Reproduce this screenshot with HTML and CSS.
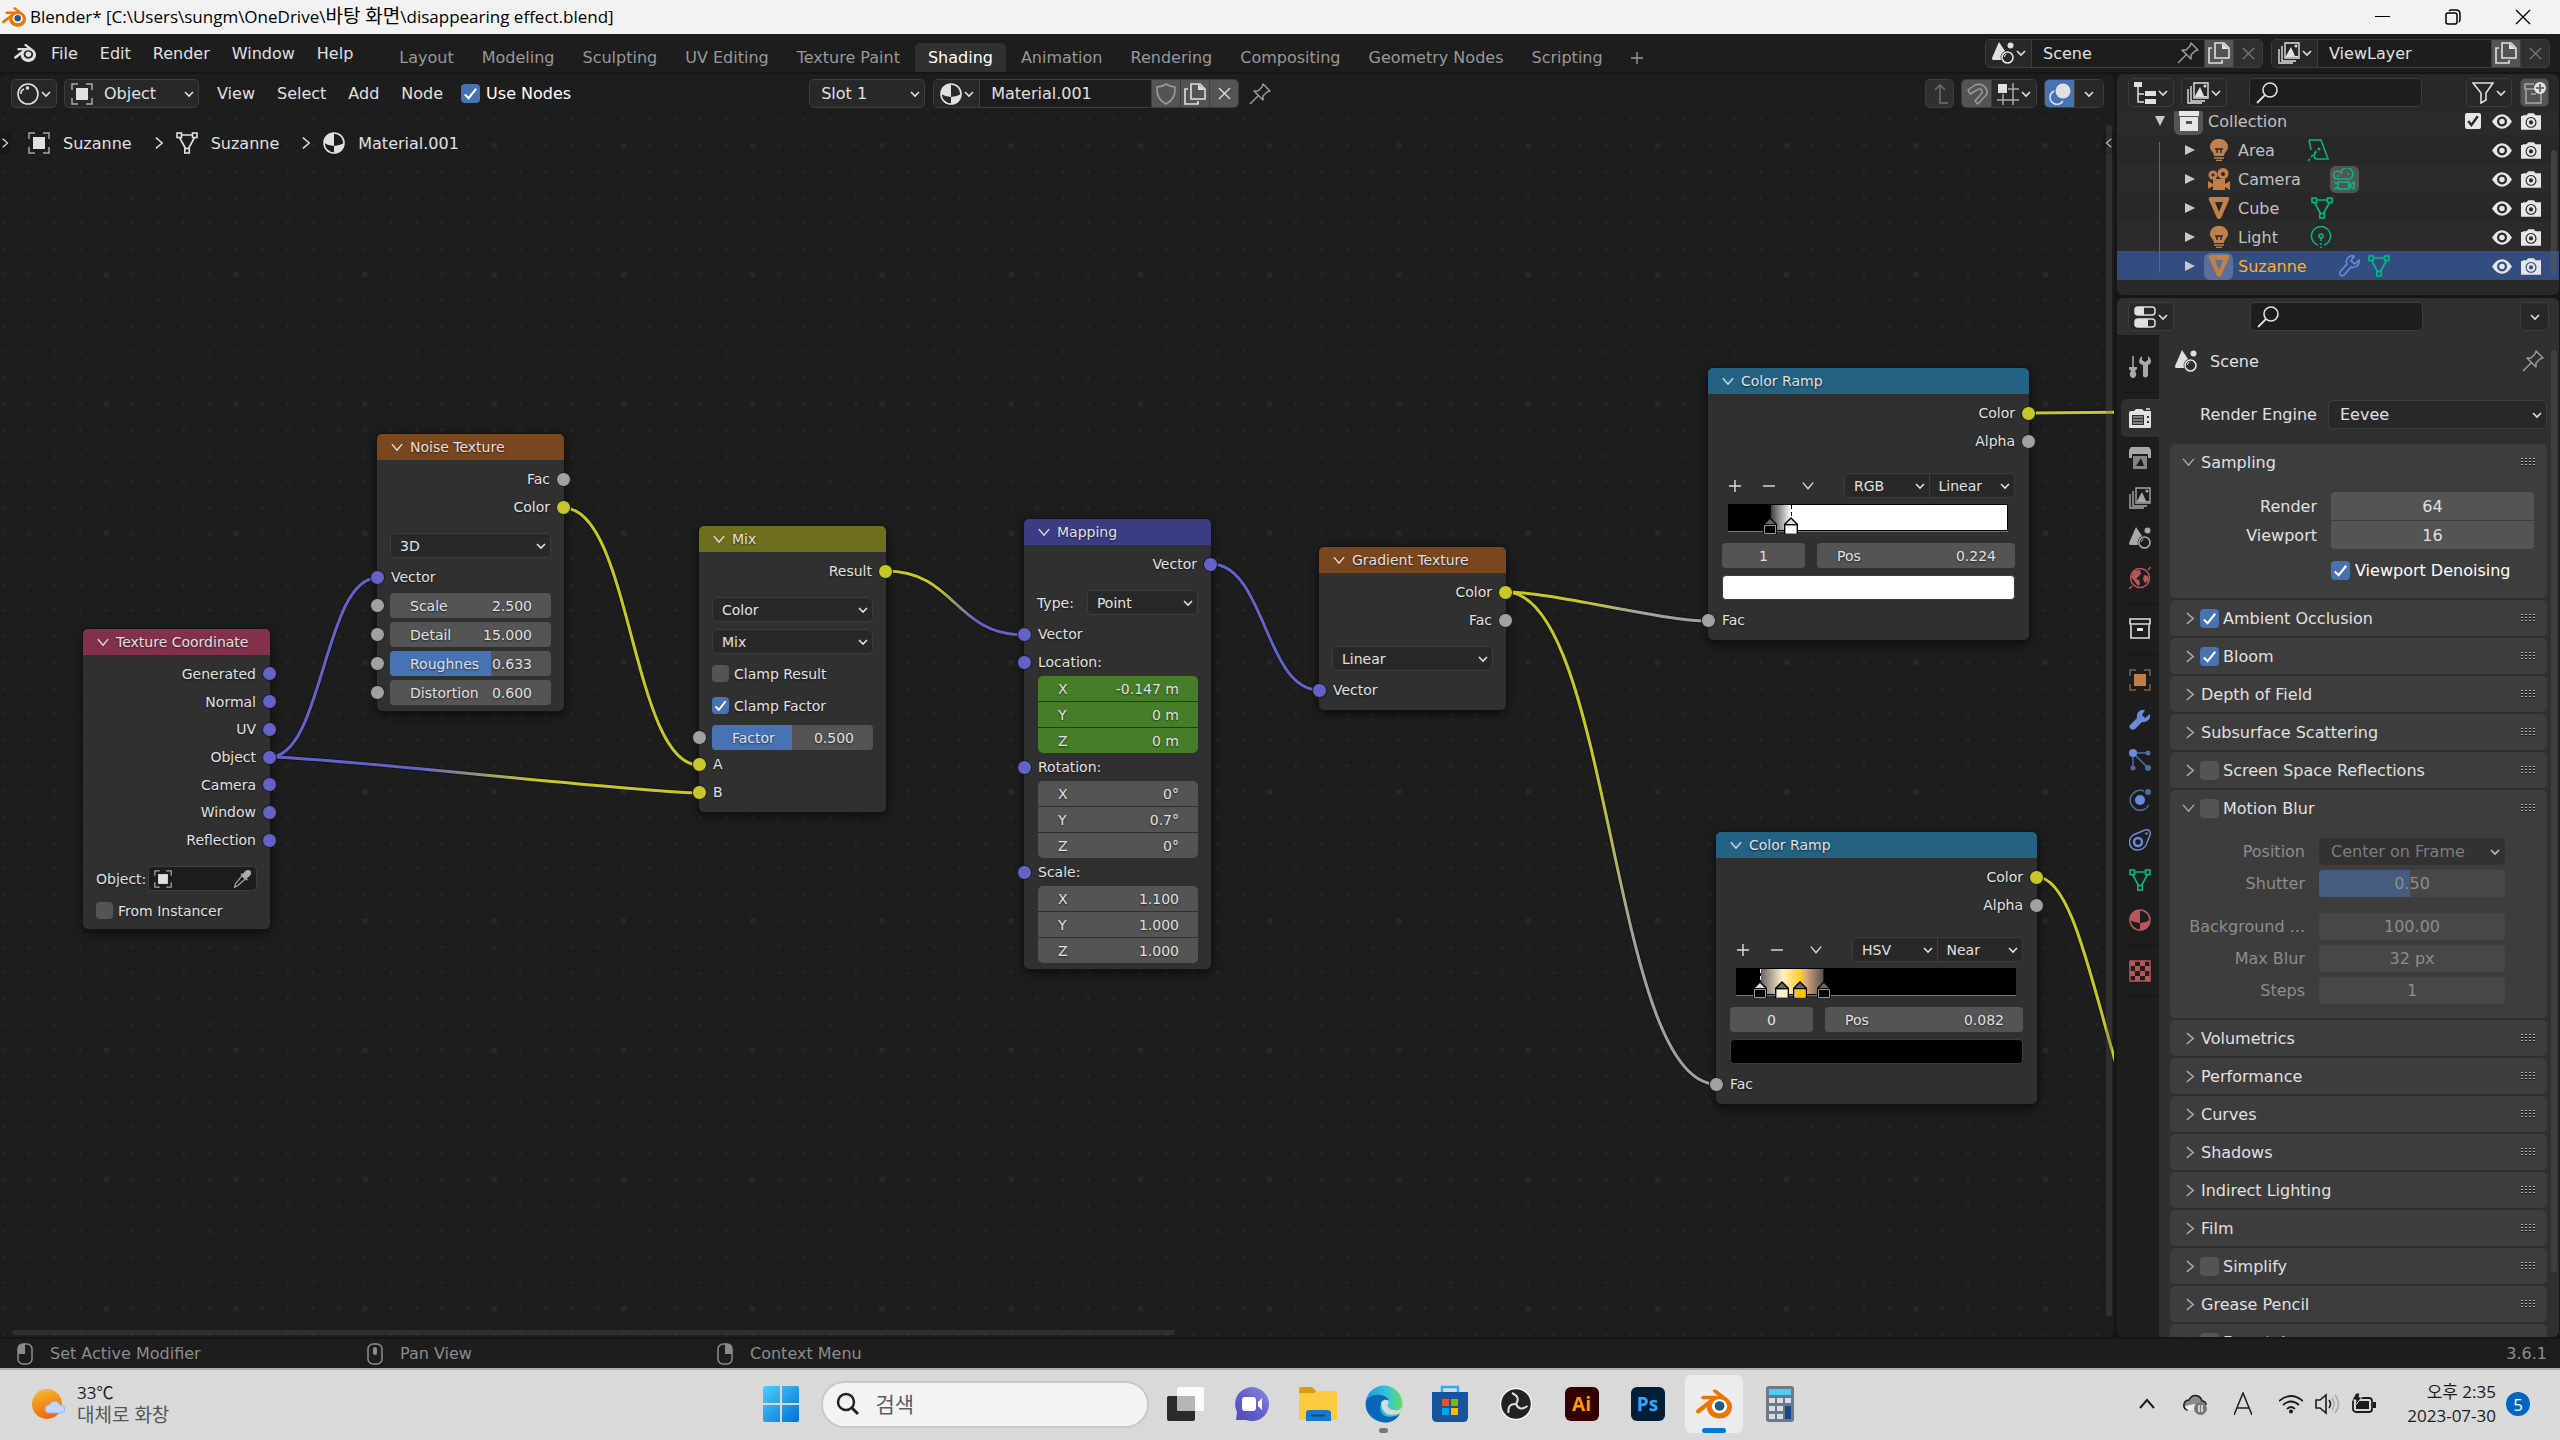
FILE: index.html
```html
<!DOCTYPE html>
<html lang="ko">
<head>
  <meta charset="UTF-8">
  <meta name="viewport" content="width=device-width, initial-scale=1.0">
  <title>Blender</title>
  <link rel="stylesheet" href="styles.css">
</head>
<body>
  <!-- icon sprite -->
  <svg class="sprite" width="0" height="0" aria-hidden="true">
    <symbol id="blender" viewBox="0 0 24 24"><path fill="currentColor" d="M12.51 13.214c.046-.8.438-1.506 1.03-2.006a3.424 3.424 0 0 1 2.212-.79c.85 0 1.631.3 2.211.79.592.5.983 1.206 1.028 2.005.045.823-.285 1.586-.865 2.153a3.389 3.389 0 0 1-2.374.938 3.393 3.393 0 0 1-2.376-.938c-.58-.567-.91-1.33-.865-2.152M7.35 14.831c.006.314.106.922.256 1.398a7.372 7.372 0 0 0 1.593 2.757 8.227 8.227 0 0 0 2.787 2.001 8.947 8.947 0 0 0 3.66.76 8.964 8.964 0 0 0 3.657-.772 8.285 8.285 0 0 0 2.785-2.01 7.428 7.428 0 0 0 1.592-2.762 6.964 6.964 0 0 0 .25-3.074 7.123 7.123 0 0 0-1.016-2.779 7.764 7.764 0 0 0-1.852-2.043h.002L13.566 2.55l-.02-.015c-.492-.378-1.319-.376-1.86.002-.547.382-.609 1.015-.123 1.415l-.001.001 3.126 2.543-9.53.01h-.013c-.788.001-1.545.518-1.695 1.172-.154.665.38 1.217 1.2 1.22V8.9l4.83-.01-8.62 6.617-.034.025c-.813.622-1.075 1.658-.563 2.315.52.667 1.625.668 2.447.004L7.414 14s-.069.52-.063.831zm12.09 1.741c-.97.988-2.326 1.548-3.795 1.55-1.47.004-2.827-.552-3.797-1.538a4.51 4.51 0 0 1-1.036-1.622 4.282 4.282 0 0 1 .282-3.519 4.702 4.702 0 0 1 1.153-1.371c.942-.768 2.141-1.183 3.396-1.185 1.256-.002 2.455.41 3.398 1.175.48.391.87.854 1.152 1.367a4.28 4.28 0 0 1 .522 1.706 4.236 4.236 0 0 1-.239 1.811 4.54 4.54 0 0 1-1.035 1.626"/></symbol>
    <symbol id="chev-down" viewBox="0 0 10 10"><path d="M1 3l4 4 4-4" fill="none" stroke="currentColor" stroke-width="1.6"/></symbol>
    <symbol id="chev-right" viewBox="0 0 10 14"><path d="M1 1l7 6-7 6" fill="none" stroke="currentColor" stroke-width="1.6"/></symbol>
    <symbol id="chev-open" viewBox="0 0 14 10"><path d="M1 1l6 7 6-7" fill="none" stroke="currentColor" stroke-width="1.6"/></symbol>
    <symbol id="tri-down" viewBox="0 0 10 10"><path d="M0 0h10L5 10z" fill="currentColor"/></symbol>
    <symbol id="tri-right" viewBox="0 0 10 10"><path d="M0 0v10l10-5z" fill="currentColor"/></symbol>
    <symbol id="ball" viewBox="0 0 22 22"><circle cx="11" cy="11" r="10" fill="none" stroke="currentColor" stroke-width="1.6"/><circle cx="10.500" cy="5" r="1.800" fill="currentColor"/><path d="M4 11a5 5 0 0 1 3-5" fill="none" stroke="currentColor" stroke-width="1.6"/></symbol>
    <symbol id="object" viewBox="0 0 22 22"><path d="M1 7V1h6M15 1h6v6M21 15v6h-6M7 21H1v-6" fill="none" stroke="currentColor" stroke-width="1.500" opacity=".7"/><rect x="5" y="5" width="12" height="12" fill="currentColor"/></symbol>
    <symbol id="mesh" viewBox="0 0 22 22"><g fill="none" stroke="currentColor" stroke-width="1.600"><path d="M5 3h12M3.500 5.500l6 11M18.500 5.500l-6 11"/><rect x="1" y="1" width="4.500" height="4.500"/><rect x="16.500" y="1" width="4.500" height="4.500"/><rect x="8.800" y="16.500" width="4.500" height="4.500"/></g></symbol>
    <symbol id="material" viewBox="0 0 22 22"><circle cx="11" cy="11" r="10" fill="none" stroke="currentColor" stroke-width="1.600"/><path d="M11 1a10 10 0 0 0-10 10q5 3 10 3zM11 14q5 0 10-3A10 10 0 0 1 11 21z" fill="currentColor"/></symbol>
    <symbol id="shield" viewBox="0 0 22 22"><path d="M11 1Q7 4 2 4q-1 12 9 17 10-5 9-17-5 0-9-3z" fill="none" stroke="currentColor" stroke-width="1.600"/></symbol>
    <symbol id="copy" viewBox="0 0 22 22"><path d="M7 1h9l5 5v10H7zM4 6H1v15h13v-3" fill="none" stroke="currentColor" stroke-width="1.600"/><path d="M14 1l7 6h-7z" fill="currentColor"/></symbol>
    <symbol id="close" viewBox="0 0 14 14"><path d="M1 1l12 12M13 1L1 13" fill="none" stroke="currentColor" stroke-width="1.400"/></symbol>
    <symbol id="pin" viewBox="0 0 22 22"><path d="M14 1l7 7-3 1-4 4v4l-9-9h4l4-4zM9 13l-8 8" fill="none" stroke="currentColor" stroke-width="1.500" stroke-linejoin="round"/></symbol>
    <symbol id="up" viewBox="0 0 22 22"><path d="M6 7l5-5 5 5M11 2v18h8" fill="none" stroke="currentColor" stroke-width="1.500"/></symbol>
    <symbol id="magnet" viewBox="0 0 22 22"><path d="M2 7l7-5c7-3 13 3 12 9l-9 10-3-3 7-8c1-4-2-5-5-3l-7 4z" fill="none" stroke="currentColor" stroke-width="1.500" stroke-linejoin="round"/></symbol>
    <symbol id="snap" viewBox="0 0 22 22"><path d="M16 0v22M6 11v11M0 17h22M11 6h11" stroke="currentColor" stroke-width="1.500" opacity=".7"/><rect x="1" y="1" width="9" height="9" fill="currentColor"/></symbol>
    <symbol id="overlay" viewBox="0 0 22 22"><circle cx="14" cy="8" r="7.500" fill="currentColor"/><path d="M5 8a7 7 0 1 0 9 10" fill="none" stroke="currentColor" stroke-width="1.600"/></symbol>
    <symbol id="scene" viewBox="0 0 22 22"><path d="M7 0l6 9a7 7 0 0 0-4 9H1Q0 18 0 16z" fill="currentColor"/><circle cx="18.500" cy="3.500" r="3" fill="currentColor"/><circle cx="15.500" cy="15.500" r="5.500" fill="none" stroke="currentColor" stroke-width="1.600"/><path d="M12.500 15a3 3 0 0 1 2-3" fill="none" stroke="currentColor"/></symbol>
    <symbol id="layers" viewBox="0 0 22 22"><path d="M7 1h14v15H7zM4 4v15h14M1 7v14h14" fill="none" stroke="currentColor" stroke-width="1.400"/><path d="M8 14l5-9 4 9zM8 14h12v1H8z" fill="currentColor"/><circle cx="18" cy="4" r="1.500" fill="currentColor"/></symbol>
    <symbol id="tree" viewBox="0 0 22 22"><path d="M4 5v15h6M4 12h6" fill="none" stroke="currentColor" stroke-width="1.500"/><path d="M0 0h8v5H0zM11 9h11v5H11zM11 17h11v5H11z" fill="currentColor"/></symbol>
    <symbol id="search" viewBox="0 0 22 22"><circle cx="14" cy="8" r="7" fill="none" stroke="currentColor" stroke-width="1.600"/><path d="M9 13l-8 8" stroke="currentColor" stroke-width="1.800"/></symbol>
    <symbol id="filter" viewBox="0 0 22 22"><path d="M1 1h20l-7 10v7l-5 3V11z" fill="none" stroke="currentColor" stroke-width="1.600"/></symbol>
    <symbol id="newcol" viewBox="0 0 22 22"><g opacity=".6" fill="none" stroke="currentColor" stroke-width="1.500"><path d="M10 2H1v5h13M2 8v13h15v-9M7 12h5"/></g><circle cx="16" cy="6" r="6" fill="currentColor"/><path d="M16 2v8M12 6h8" stroke="#545454" stroke-width="1.600"/></symbol>
    <symbol id="collection" viewBox="0 0 22 22"><path d="M1 1h20v5H1zM2 7v13h18V7" fill="none" stroke="currentColor" stroke-width="1.600"/><path d="M8 10h6v3H8z" fill="currentColor"/></symbol>
    <symbol id="collection-fill" viewBox="0 0 22 22"><path d="M1 0h20v6H1zM2 7h18v14H2z" fill="currentColor"/><rect x="8" y="11" width="6" height="3" fill="#545454"/></symbol>
    <symbol id="bulb" viewBox="0 0 22 22"><path d="M11 0a8 8 0 0 1 9 8c0 4-4 5-4 9H6c0-4-4-5-4-9a8 8 0 0 1 9-8z" fill="currentColor"/><path d="M7 10h8M9 10v4M13 10v4" stroke="#282828" stroke-width="1.500"/><path d="M6 19h10M8 21.500h6" stroke="currentColor" stroke-width="1.500"/></symbol>
    <symbol id="cam" viewBox="0 0 22 22"><circle cx="5" cy="7" r="4.500" fill="currentColor"/><circle cx="15" cy="5.500" r="5.500" fill="currentColor"/><path d="M5 11h12v11H5zM0 13l5 3v2l-5 3zM22 13l-5 3v3l5 3z" fill="currentColor"/><circle cx="5" cy="7" r="1.500" fill="#282828"/><circle cx="15" cy="6" r="2" fill="#282828"/></symbol>
    <symbol id="cam-line" viewBox="0 0 22 22"><g fill="none" stroke="currentColor" stroke-width="1.500"><path d="M5 11a4 4 0 1 1 3-6 6 6 0 1 1 9 6zM5 14h11v7H5zM1 14l4 2M1 21l4-2M21 14v7l-5-3z"/><path d="M4 8h2M14 6h2"/></g></symbol>
    <symbol id="cone" viewBox="0 0 22 22"><path fill-rule="evenodd" d="M2 0h18q2 1 1 3l-8 18q-2 2-4 0L1 3Q0 1 2 0zM7 5l4 10 4-10z" fill="currentColor"/></symbol>
    <symbol id="area" viewBox="0 0 22 22"><path d="M2 1h12l7 19H10q-3 0-3-4l2-3M2 1l2 10" fill="none" stroke="currentColor" stroke-width="1.500"/><path d="M1 22l9-11" stroke="currentColor" stroke-width="1.500" stroke-dasharray="3 2"/><circle cx="12" cy="10" r="1.500" fill="currentColor"/></symbol>
    <symbol id="light" viewBox="0 0 22 22"><path d="M8 19a9.500 9.500 0 1 1 6 0" fill="none" stroke="currentColor" stroke-width="1.500"/><circle cx="11" cy="10" r="2" fill="none" stroke="currentColor" stroke-width="1.500"/><path d="M11 12v3M11 17v2M11 20.500v1.500" stroke="currentColor" stroke-width="1.500"/></symbol>
    <symbol id="wrench" viewBox="0 0 22 22"><path d="M20 5l-4 4-4-3 3-5c-5-1-9 3-7 8l-7 8c-1 3 2 5 4 3l7-8c5 1 9-2 8-7z" fill="none" stroke="currentColor" stroke-width="1.600" stroke-linejoin="round"/></symbol>
    <symbol id="wrench-fill" viewBox="0 0 22 22"><path d="M21 5l-5 4-3-3 3-5c-5-1-9 3-8 8l-7 7c-2 3 2 6 5 4l7-7c5 1 9-3 8-8z" fill="currentColor"/></symbol>
    <symbol id="eye" viewBox="0 0 22 16"><path fill-rule="evenodd" d="M0 8q5-8 11-8t11 8q-5 8-11 8T0 8zm11-5.500a5.500 5.500 0 1 0 .1 0z" fill="currentColor"/><circle cx="11" cy="8" r="3" fill="currentColor"/></symbol>
    <symbol id="camera" viewBox="0 0 22 18"><path fill-rule="evenodd" d="M6 2l2-2h6l2 2h6v16H0V3h2V2h2zm5 2a6 6 0 1 0 .1 0z" fill="currentColor"/><circle cx="11" cy="10" r="3.500" fill="none" stroke="currentColor" stroke-width="2.500"/></symbol>
    <symbol id="props" viewBox="0 0 22 22"><rect x="1" y="1" width="20" height="8" rx="3" fill="none" stroke="currentColor" stroke-width="1.500"/><rect x="1" y="13" width="20" height="8" rx="3" fill="none" stroke="currentColor" stroke-width="1.500"/><path d="M4 1h6v8H4q-3 0-3-4t3-4zM4 13h10v8H4q-3 0-3-4t3-4z" fill="currentColor"/></symbol>
    <symbol id="tools" viewBox="0 0 22 22"><path d="M4 0v11" stroke="currentColor" stroke-width="1.600"/><path d="M0 11h8v2l-2 2q3 4-1 7H3q-4-3-1-7l-2-2z" fill="currentColor"/><path d="M13 0v4l3 2 3-2V0q3 2 3 5t-3 4v11q-3 3-5 0V9q-4-1-4-4t3-5z" fill="currentColor"/></symbol>
    <symbol id="render" viewBox="0 0 22 22"><path fill-rule="evenodd" d="M2 4h3l2-2h6l2 2h7v16q0 1-1 1H1q-1 0-1-1V6q0-2 2-2zm1 4v10h12V8zm15 1v2h2V9zm0 5v2h2v-2z" fill="currentColor"/><path d="M4 10h10M4 13h10M4 16h10" stroke="currentColor" stroke-width="1.500" opacity=".6"/><path d="M17 2h4" stroke="currentColor" stroke-width="1.500"/></symbol>
    <symbol id="output" viewBox="0 0 22 22"><path d="M2 0h18l2 3v8h-3V7H3v4H0V3z" fill="currentColor"/><path fill-rule="evenodd" d="M4 9h14v13H4zm3 10h8l-3-8z" fill="currentColor" opacity=".75"/></symbol>
    <symbol id="world" viewBox="0 0 22 22"><circle cx="11" cy="11" r="9.500" fill="none" stroke="currentColor" stroke-width="1.500"/><path d="M5 4l6-1 1 4-5 5 3 1 1 4-2 2-3-4-4-5zM15 8l4 1 1 4-4 3-2-4z" fill="currentColor"/><path d="M0 22l3-3M19 3l3-3" stroke="currentColor" stroke-width="1.500"/></symbol>
    <symbol id="particles" viewBox="0 0 22 22"><g opacity=".7"><path d="M4 4l15 15M4 4h15M4 4v15" stroke="currentColor" stroke-width="1.500"/><circle cx="19" cy="4" r="2.500" fill="currentColor"/><circle cx="19" cy="19" r="3" fill="currentColor"/><circle cx="4" cy="19" r="2.500" fill="currentColor"/></g><circle cx="4" cy="4" r="4" fill="currentColor"/></symbol>
    <symbol id="physics" viewBox="0 0 22 22"><circle cx="11" cy="11" r="5" fill="currentColor"/><g opacity=".7"><path d="M15 2a10 10 0 1 0 5 14" fill="none" stroke="currentColor" stroke-width="1.500"/><circle cx="19" cy="3" r="3" fill="currentColor"/></g></symbol>
    <symbol id="constraint" viewBox="0 0 22 22"><path d="M4 6L16 1c4-1 6 2 5 5l-4 10c-3 6-11 6-14 3-4-4-3-10 1-13z" fill="none" stroke="currentColor" stroke-width="1.500"/><circle cx="9" cy="13" r="4" fill="none" stroke="currentColor" stroke-width="2.500"/><circle cx="17.500" cy="4.500" r="1.200" fill="currentColor"/></symbol>
    <symbol id="texture" viewBox="0 0 22 22"><rect x="1" y="1" width="20" height="20" fill="none" stroke="currentColor" stroke-width="1.500"/><path d="M1 1h5v5H1zM11 1h5v5h-5zM6 6h5v5H6zM16 6h5v5h-5zM1 11h5v5H1zM11 11h5v5h-5zM6 16h5v5H6zM16 16h5v5h-5z" fill="currentColor"/></symbol>
    <symbol id="grip" viewBox="0 0 15 9"><path d="M0 1.500h15M0 4.500h15M0 7.500h15" stroke="#111" stroke-width="1" stroke-dasharray="2 2"/><path d="M0 .500h15M0 3.500h15M0 6.500h15" stroke="#b0b0b0" stroke-width="1" stroke-dasharray="2 2"/></symbol>
    <symbol id="dropper" viewBox="0 0 22 22"><path d="M11 7l4 4-9 8-4 2 1-4z" fill="none" stroke="currentColor" stroke-width="1.500"/><path d="M9 5l2-1 1 1c4-6 7-6 9-4s2 5-4 9l1 1-1 2zM2 19l2 1-3 2z" fill="currentColor"/></symbol>
    <symbol id="plus" viewBox="0 0 12 12"><path d="M6 0v12M0 6h12" stroke="currentColor" stroke-width="1.400"/></symbol>
    <symbol id="minus" viewBox="0 0 12 12"><path d="M0 6h12" stroke="currentColor" stroke-width="1.400"/></symbol>
    <symbol id="mouse" viewBox="0 0 16 22"><rect x="1" y="1" width="14" height="20" rx="5" fill="none" stroke="currentColor" stroke-width="1.500"/></symbol>
  </svg>

  <header class="titlebar">
    <svg class="logo" viewBox="0 0 24 24"><circle cx="15.700" cy="13.300" r="5" fill="#fff"/><use href="#blender"/><circle cx="15.700" cy="13.300" r="3.200" fill="#265787"/></svg>
    <span class="title">Blender* [C:\Users\sungm\OneDrive\<span class="ko">바탕 화면</span>\disappearing effect.blend]</span>
    <button aria-label="Minimize"><svg width="16" height="16"><path d="M0 7.500h15" stroke="#000"/></svg></button>
    <button aria-label="Restore"><svg width="16" height="16"><path d="M1 6q0-2 2-2h7q2 0 2 2v7q0 2-2 2H3q-2 0-2-2zM4 2q1-1 2-1h5q4 0 4 4v5q0 2-1 3" fill="none" stroke="#000" stroke-width="1.500"/></svg></button>
    <button aria-label="Close"><svg width="16" height="16"><path d="M1 1l14 14M15 1L1 15" stroke="#000" stroke-width="1.300"/></svg></button>
  </header>

  <div class="topbar">
    <nav class="menus">
      <svg class="icon"><use href="#blender"/></svg>
      <button>File</button><button>Edit</button><button>Render</button><button>Window</button><button>Help</button>
    </nav>
    <nav class="workspaces">
      <button>Layout</button><button>Modeling</button><button>Sculpting</button><button>UV Editing</button><button>Texture Paint</button><button class="active">Shading</button><button>Animation</button><button>Rendering</button><button>Compositing</button><button>Geometry Nodes</button><button>Scripting</button><button aria-label="Add workspace"><svg width="12" height="12"><use href="#plus"/></svg></button>
    </nav>
    <div class="id-block">
      <button class="pick" aria-label="Browse scene"><svg class="icon"><use href="#scene"/></svg><svg class="chev"><use href="#chev-down"/></svg></button>
      <input class="scene-name" value="Scene" aria-label="Scene name">
      <button class="pin-btn" aria-label="Pin"><svg class="icon dim"><use href="#pin"/></svg></button>
      <button class="lit" aria-label="New scene"><svg class="icon"><use href="#copy"/></svg></button>
      <button class="off" aria-label="Delete scene"><svg class="small"><use href="#close"/></svg></button>
    </div>
    <div class="id-block">
      <button class="pick" aria-label="Browse view layer"><svg class="icon"><use href="#layers"/></svg><svg class="chev"><use href="#chev-down"/></svg></button>
      <input class="layer-name" value="ViewLayer" aria-label="View layer name">
      <button class="lit" aria-label="New layer"><svg class="icon"><use href="#copy"/></svg></button>
      <button class="off" aria-label="Delete layer"><svg class="small"><use href="#close"/></svg></button>
    </div>
  </div>

  <main class="screen">
    <section class="editor">
      <div class="editor-header">
        <button class="type-btn" aria-label="Editor type"><svg class="icon"><use href="#ball"/></svg><svg class="chev"><use href="#chev-down"/></svg></button>
        <div class="mode"><svg class="icon"><use href="#object"/></svg><select aria-label="Shader type"><option>Object</option></select></div>
        <nav class="menus">
          <button>View</button><button>Select</button><button>Add</button><button>Node</button>
        </nav>
        <label class="check use-nodes"><input type="checkbox" checked>Use Nodes</label>
        <select class="slot" aria-label="Slot"><option>Slot 1</option></select>
        <div class="id-block">
          <button class="pick" aria-label="Browse material"><svg class="icon"><use href="#material"/></svg><svg class="chev"><use href="#chev-down"/></svg></button>
          <input class="mat-name" value="Material.001" aria-label="Material name">
          <button class="lit" aria-label="Fake user"><svg class="icon dim"><use href="#shield"/></svg></button>
          <button class="lit" aria-label="New material"><svg class="icon"><use href="#copy"/></svg></button>
          <button class="lit" aria-label="Unlink"><svg class="small"><use href="#close"/></svg></button>
        </div>
        <button class="plain" aria-label="Pin"><svg class="icon dim"><use href="#pin"/></svg></button>
        <div class="header-right">
          <button class="box parent" aria-label="Parent node tree"><svg class="icon dim"><use href="#up"/></svg></button>
          <div class="id-block"><button class="lit" aria-label="Snap"><svg class="icon dim"><use href="#magnet"/></svg></button><button class="pick" aria-label="Snap to"><svg class="icon"><use href="#snap"/></svg><svg class="chev"><use href="#chev-down"/></svg></button></div>
          <div class="id-block"><button class="on" aria-label="Overlays"><svg class="icon"><use href="#overlay"/></svg></button><button aria-label="Overlay options"><svg class="chev"><use href="#chev-down"/></svg></button></div>
        </div>
      </div>

      <div class="node-tree">
        <svg class="links">
          <defs>
            <pattern id="dots" x="41" y="6" width="129.250" height="129.250" patternUnits="userSpaceOnUse">
              <g fill="#262626"><path id="dotrow" d="M12 12h3v3h-3zM38 12h3v3h-3zM64 12h3v3h-3zM90 12h3v3h-3zM116 12h3v3h-3z"/><use href="#dotrow" y="26"/><use href="#dotrow" y="52"/><use href="#dotrow" y="78"/><use href="#dotrow" y="104"/></g>
              <rect x="63" y="63" width="5" height="5" fill="#292929"/>
            </pattern>
            <linearGradient id="vec-col" gradientUnits="userSpaceOnUse" x1="270" y1="0" x2="699" y2="0"><stop offset=".35" stop-color="#6363c7"/><stop offset=".62" stop-color="#c7c729"/></linearGradient>
            <linearGradient id="col-vec" gradientUnits="userSpaceOnUse" x1="886" y1="0" x2="1024" y2="0"><stop offset=".35" stop-color="#c7c729"/><stop offset=".65" stop-color="#6363c7"/></linearGradient>
            <linearGradient id="col-fac" gradientUnits="userSpaceOnUse" x1="1506" y1="0" x2="1708" y2="0"><stop offset=".35" stop-color="#c7c729"/><stop offset=".65" stop-color="#a1a1a1"/></linearGradient>
            <linearGradient id="col-fac2" gradientUnits="userSpaceOnUse" x1="0" y1="592" x2="0" y2="1084"><stop offset=".35" stop-color="#c7c729"/><stop offset=".7" stop-color="#a1a1a1"/></linearGradient>
          </defs>
          <rect y="38" width="100%" height="100%" fill="url(#dots)"/>
          <g id="noodles" transform="translate(0 -74)" fill="none">
            <g stroke="#141414" stroke-width="5">
              <path d="M270 757C323 757 324 578 377 578"/><path d="M270 757C328 757 641 793 699 793"/><path d="M564 508C631 508 632 765 699 765"/><path d="M886 571C955 571 955 635 1024 635"/><path d="M1211 564C1265 564 1265 690 1319 690"/><path d="M1506 592C1553 592 1661 621 1708 621"/><path d="M1506 592C1611 592 1611 1084 1716 1084"/><path d="M2029 413L2130 412"/><path d="M2037 877C2070 877 2090 975 2114 1057l10 36"/>
            </g>
            <g stroke-width="3">
              <path d="M270 757C323 757 324 578 377 578" stroke="#6363c7"/>
              <path d="M270 757C328 757 641 793 699 793" stroke="url(#vec-col)"/>
              <path d="M564 508C631 508 632 765 699 765" stroke="#c7c729"/>
              <path d="M886 571C955 571 955 635 1024 635" stroke="url(#col-vec)"/>
              <path d="M1211 564C1265 564 1265 690 1319 690" stroke="#6363c7"/>
              <path d="M1506 592C1611 592 1611 1084 1716 1084" stroke="url(#col-fac2)"/>
              <path d="M1506 592C1553 592 1661 621 1708 621" stroke="url(#col-fac)"/>
              <path d="M2029 413L2130 412" stroke="#c7c729"/>
              <path d="M2037 877C2070 877 2090 975 2114 1057l10 36" stroke="#c7c729"/>
            </g>
          </g>
        </svg>

        <article class="node n-coord">
          <h2 class="input"><svg><use href="#chev-open"/></svg>Texture Coordinate</h2>
          <div class="outs">
            <p class="out vec">Generated</p><p class="out vec">Normal</p><p class="out vec">UV</p><p class="out vec">Object</p><p class="out vec">Camera</p><p class="out vec">Window</p><p class="out vec">Reflection</p>
          </div>
          <div class="stack">
            <div class="line tight"><label for="obj">Object:</label><div class="picker"><svg><use href="#object"/></svg><input id="obj"><svg class="dropper"><use href="#dropper"/></svg></div></div>
            <label class="check"><input type="checkbox">From Instancer</label>
          </div>
        </article>

        <article class="node n-noise">
          <h2 class="texture"><svg><use href="#chev-open"/></svg>Noise Texture</h2>
          <div class="outs"><p class="out fac">Fac</p><p class="out col">Color</p></div>
          <div class="stack"><select aria-label="Dimensions"><option>3D</option></select></div>
          <p class="in vec first">Vector</p>
          <div class="ins">
            <div class="in fac"><label class="num">Scale<input value="2.500"></label></div>
            <div class="in fac"><label class="num">Detail<input value="15.000"></label></div>
            <div class="in fac"><label class="num slide" style="--fill: 63%">Roughnes<input value="0.633"></label></div>
            <div class="in fac"><label class="num">Distortion<input value="0.600"></label></div>
          </div>
        </article>

        <article class="node n-mix">
          <h2 class="color"><svg><use href="#chev-open"/></svg>Mix</h2>
          <div class="outs"><p class="out col">Result</p></div>
          <div class="stack">
            <select aria-label="Data type"><option>Color</option></select>
            <select aria-label="Blend mode"><option>Mix</option></select>
            <label class="check"><input type="checkbox">Clamp Result</label>
            <label class="check"><input type="checkbox" checked>Clamp Factor</label>
            <div class="line in fac wide"><label class="num slide" style="--fill: 50%">Factor<input value="0.500"></label></div>
          </div>
          <p class="in col">A</p><p class="in col">B</p>
        </article>

        <article class="node n-mapping">
          <h2 class="vector"><svg><use href="#chev-open"/></svg>Mapping</h2>
          <div class="outs"><p class="out vec">Vector</p></div>
          <div class="stack"><div class="line"><label for="maptype">Type:</label><select id="maptype"><option>Point</option></select></div></div>
          <p class="in vec first">Vector</p>
          <p class="in vec">Location:</p>
          <div class="triple keyed"><label class="num">X<input value="-0.147 m"></label><label class="num">Y<input value="0 m"></label><label class="num">Z<input value="0 m"></label></div>
          <p class="in vec">Rotation:</p>
          <div class="triple"><label class="num">X<input value="0°"></label><label class="num">Y<input value="0.7°"></label><label class="num">Z<input value="0°"></label></div>
          <p class="in vec">Scale:</p>
          <div class="triple"><label class="num">X<input value="1.100"></label><label class="num">Y<input value="1.000"></label><label class="num">Z<input value="1.000"></label></div>
        </article>

        <article class="node n-gradient">
          <h2 class="texture"><svg><use href="#chev-open"/></svg>Gradient Texture</h2>
          <div class="outs"><p class="out col">Color</p><p class="out fac">Fac</p></div>
          <div class="stack"><select aria-label="Gradient type"><option>Linear</option></select></div>
          <p class="in vec first">Vector</p>
        </article>

        <article class="node ramp n-ramp1">
          <h2 class="convert"><svg><use href="#chev-open"/></svg>Color Ramp</h2>
          <div class="outs"><p class="out col">Color</p><p class="out fac">Alpha</p></div>
          <div class="ramp-tools">
            <button aria-label="Add stop"><svg width="12" height="12"><use href="#plus"/></svg></button><button aria-label="Remove stop"><svg width="12" height="12"><use href="#minus"/></svg></button><button aria-label="Tools"><svg width="12" height="10"><use href="#chev-open"/></svg></button>
            <div class="pair"><select aria-label="Color mode"><option>RGB</option></select><select aria-label="Interpolation"><option>Linear</option></select></div>
          </div>
          <svg class="band" width="280" height="31" viewBox="0 0 280 31">
            <defs><linearGradient id="g1"><stop offset=".152" stop-color="#000"/><stop offset=".153" stop-color="#444"/><stop offset=".224" stop-color="#fff"/></linearGradient></defs>
            <rect x=".500" y=".500" width="279" height="26" fill="url(#g1)" stroke="#000"/><path d="M0 27.500h280" stroke="#777"/>
            <path d="M63.500 1v14" stroke="#000" stroke-dasharray="4 3"/>
            <g transform="translate(42 14)"><path d="M-7 16V6L0-1 7 6v10z" fill="#000"/><path d="M-5 6l5-5 5 5z" fill="#666"/><path d="M-5.500 7.500h11v8h-11z" fill="#000" stroke="#999"/></g>
            <g transform="translate(63 14)"><path d="M-7 16V6L0-1 7 6v10z" fill="#000"/><path d="M-5 6l5-5 5 5z" fill="#ddd"/><path d="M-5.500 7.500h11v8h-11z" fill="#fff" stroke="#999"/></g>
          </svg>
          <div class="ramp-pos"><input class="index" value="1" aria-label="Active stop"><label class="num">Pos<input value="0.224"></label></div>
          <button class="swatch white" aria-label="Stop color"></button>
          <p class="in fac">Fac</p>
        </article>

        <article class="node ramp n-ramp2">
          <h2 class="convert"><svg><use href="#chev-open"/></svg>Color Ramp</h2>
          <div class="outs"><p class="out col">Color</p><p class="out fac">Alpha</p></div>
          <div class="ramp-tools">
            <button aria-label="Add stop"><svg width="12" height="12"><use href="#plus"/></svg></button><button aria-label="Remove stop"><svg width="12" height="12"><use href="#minus"/></svg></button><button aria-label="Tools"><svg width="12" height="10"><use href="#chev-open"/></svg></button>
            <div class="pair"><select aria-label="Color mode"><option>HSV</option></select><select aria-label="Interpolation"><option>Near</option></select></div>
          </div>
          <svg class="band" width="280" height="31" viewBox="0 0 280 31">
            <defs><linearGradient id="g2"><stop offset=".086" stop-color="#000"/><stop offset=".09" stop-color="#6c6668"/><stop offset=".164" stop-color="#fff0c8"/><stop offset=".229" stop-color="#ffcf28"/><stop offset=".25" stop-color="#d9a67c"/><stop offset=".31" stop-color="#5c5050"/><stop offset=".313" stop-color="#000"/></linearGradient></defs>
            <rect x=".500" y=".500" width="279" height="26" fill="url(#g2)" stroke="#000"/><path d="M0 27.500h280" stroke="#777"/>
            <path d="M24.500 1v14" stroke="#fff" stroke-dasharray="4 3"/>
            <g transform="translate(24 14)"><path d="M-7 16V6L0-1 7 6v10z" fill="#000"/><path d="M-5 6l5-5 5 5z" fill="#ddd"/><path d="M-5.500 7.500h11v8h-11z" fill="#000" stroke="#999"/></g>
            <g transform="translate(46 14)"><path d="M-7 16V6L0-1 7 6v10z" fill="#000"/><path d="M-5 6l5-5 5 5z" fill="#666"/><path d="M-5.500 7.500h11v8h-11z" fill="#fff0c8" stroke="#999"/></g>
            <g transform="translate(64 14)"><path d="M-7 16V6L0-1 7 6v10z" fill="#000"/><path d="M-5 6l5-5 5 5z" fill="#666"/><path d="M-5.500 7.500h11v8h-11z" fill="#ffc800" stroke="#999"/></g>
            <g transform="translate(88 14)"><path d="M-7 16V6L0-1 7 6v10z" fill="#000"/><path d="M-5 6l5-5 5 5z" fill="#666"/><path d="M-5.500 7.500h11v8h-11z" fill="#000" stroke="#999"/></g>
          </svg>
          <div class="ramp-pos"><input class="index" value="0" aria-label="Active stop"><label class="num">Pos<input value="0.082"></label></div>
          <button class="swatch" aria-label="Stop color"></button>
          <p class="in fac">Fac</p>
        </article>
      </div>

      <div class="crumbs">
        <svg class="icon"><use href="#object"/></svg><span>Suzanne</span>
        <svg class="sep"><use href="#chev-right"/></svg>
        <svg class="icon"><use href="#mesh"/></svg><span>Suzanne</span>
        <svg class="sep"><use href="#chev-right"/></svg>
        <svg class="icon"><use href="#material"/></svg><span>Material.001</span>
      </div>
      <button class="toggle left" aria-label="Show toolbar"><svg><use href="#chev-right"/></svg></button>
      <button class="toggle right" aria-label="Show sidebar"><svg><use href="#chev-right"/></svg></button>
      <div class="bar-v"></div>
      <div class="bar-h"></div>
    </section>

    <aside class="side">
      <section class="outliner">
        <div class="area-header">
          <button class="box pick" aria-label="Editor type"><svg class="icon"><use href="#tree"/></svg><svg class="chev"><use href="#chev-down"/></svg></button>
          <button class="box pick second" aria-label="Display mode"><svg class="icon"><use href="#layers"/></svg><svg class="chev"><use href="#chev-down"/></svg></button>
          <label class="search"><svg class="icon"><use href="#search"/></svg><input type="search" aria-label="Filter outliner"></label>
          <button class="box pick filter" aria-label="Filter"><svg class="icon"><use href="#filter"/></svg><svg class="chev"><use href="#chev-down"/></svg></button>
          <button class="box newcol" aria-label="New collection"><svg class="icon"><use href="#newcol"/></svg></button>
        </div>
        <div class="rows">
          <ul>
            <li class="coll"><svg class="tri"><use href="#tri-down"/></svg><span class="oi lit"><svg class="icon"><use href="#collection-fill"/></svg></span>Collection<input type="checkbox" class="vis" checked aria-label="Exclude from view layer"><svg class="eye"><use href="#eye"/></svg><svg class="ren"><use href="#camera"/></svg></li>
            <li><svg class="tri"><use href="#tri-right"/></svg><span class="oi"><svg class="icon orange"><use href="#bulb"/></svg></span>Area<svg class="icon data"><use href="#area"/></svg><svg class="eye"><use href="#eye"/></svg><svg class="ren"><use href="#camera"/></svg></li>
            <li><svg class="tri"><use href="#tri-right"/></svg><span class="oi"><svg class="icon orange"><use href="#cam"/></svg></span>Camera<span class="oi lit data"><svg class="icon"><use href="#cam-line"/></svg></span><svg class="eye"><use href="#eye"/></svg><svg class="ren"><use href="#camera"/></svg></li>
            <li><svg class="tri"><use href="#tri-right"/></svg><span class="oi"><svg class="icon orange"><use href="#cone"/></svg></span>Cube<svg class="icon data"><use href="#mesh"/></svg><svg class="eye"><use href="#eye"/></svg><svg class="ren"><use href="#camera"/></svg></li>
            <li><svg class="tri"><use href="#tri-right"/></svg><span class="oi"><svg class="icon orange"><use href="#bulb"/></svg></span>Light<svg class="icon data"><use href="#light"/></svg><svg class="eye"><use href="#eye"/></svg><svg class="ren"><use href="#camera"/></svg></li>
            <li class="selected"><svg class="tri"><use href="#tri-right"/></svg><span class="oi lit"><svg class="icon orange"><use href="#cone"/></svg></span>Suzanne<svg class="icon data blue"><use href="#wrench"/></svg><svg class="icon data2"><use href="#mesh"/></svg><svg class="eye"><use href="#eye"/></svg><svg class="ren"><use href="#camera"/></svg></li>
          </ul>
        </div>
      </section>

      <section class="properties">
        <div class="area-header">
          <button class="box pick" aria-label="Editor type"><svg class="icon"><use href="#props"/></svg><svg class="chev"><use href="#chev-down"/></svg></button>
          <label class="search props-search"><svg class="icon"><use href="#search"/></svg><input type="search" aria-label="Search properties"></label>
          <button class="box options" aria-label="Options"><svg class="chev"><use href="#chev-down"/></svg></button>
        </div>
        <div class="props-body">
          <nav class="tabs">
            <button aria-label="Tool"><svg class="icon"><use href="#tools"/></svg></button>
            <hr>
            <button class="active" aria-label="Render"><svg class="icon"><use href="#render"/></svg></button>
            <button aria-label="Output"><svg class="icon"><use href="#output"/></svg></button>
            <button aria-label="View Layer"><svg class="icon"><use href="#layers"/></svg></button>
            <button aria-label="Scene"><svg class="icon"><use href="#scene"/></svg></button>
            <button class="red" aria-label="World"><svg class="icon"><use href="#world"/></svg></button>
            <hr>
            <button class="bright" aria-label="Collection"><svg class="icon"><use href="#collection"/></svg></button>
            <hr>
            <button class="orange" aria-label="Object"><svg class="icon"><use href="#object"/></svg></button>
            <button class="blue" aria-label="Modifiers"><svg class="icon"><use href="#wrench-fill"/></svg></button>
            <button class="blue" aria-label="Particles"><svg class="icon"><use href="#particles"/></svg></button>
            <button class="blue" aria-label="Physics"><svg class="icon"><use href="#physics"/></svg></button>
            <button class="blue" aria-label="Constraints"><svg class="icon"><use href="#constraint"/></svg></button>
            <button class="green" aria-label="Data"><svg class="icon"><use href="#mesh"/></svg></button>
            <button class="red" aria-label="Material"><svg class="icon"><use href="#material"/></svg></button>
            <hr>
            <button class="red" aria-label="Texture"><svg class="icon"><use href="#texture"/></svg></button>
            <hr>
          </nav>
          <div class="panels">
            <div class="context"><svg class="icon"><use href="#scene"/></svg>Scene<button class="plain" aria-label="Pin"><svg class="icon dim"><use href="#pin"/></svg></button></div>
            <div class="engine"><label for="engine">Render Engine</label><select id="engine"><option>Eevee</option></select></div>

            <section class="panel">
              <h3><svg class="open"><use href="#chev-open"/></svg>Sampling<svg class="grip"><use href="#grip"/></svg></h3>
              <div class="form sampling">
                <label for="s-render">Render</label><input id="s-render" class="f-top" value="64">
                <label for="s-view">Viewport</label><input id="s-view" class="f-bottom" value="16">
                <label class="check"><input type="checkbox" checked>Viewport Denoising</label>
              </div>
            </section>
            <section class="panel"><h3><svg class="shut"><use href="#chev-right"/></svg><label class="check"><input type="checkbox" checked>Ambient Occlusion</label><svg class="grip"><use href="#grip"/></svg></h3></section>
            <section class="panel"><h3><svg class="shut"><use href="#chev-right"/></svg><label class="check"><input type="checkbox" checked>Bloom</label><svg class="grip"><use href="#grip"/></svg></h3></section>
            <section class="panel"><h3><svg class="shut"><use href="#chev-right"/></svg>Depth of Field<svg class="grip"><use href="#grip"/></svg></h3></section>
            <section class="panel"><h3><svg class="shut"><use href="#chev-right"/></svg>Subsurface Scattering<svg class="grip"><use href="#grip"/></svg></h3></section>
            <section class="panel"><h3><svg class="shut"><use href="#chev-right"/></svg><label class="check"><input type="checkbox">Screen Space Reflections</label><svg class="grip"><use href="#grip"/></svg></h3></section>
            <section class="panel">
              <h3><svg class="open"><use href="#chev-open"/></svg><label class="check"><input type="checkbox">Motion Blur</label><svg class="grip"><use href="#grip"/></svg></h3>
              <div class="form blur">
                <label for="b-pos">Position</label><select id="b-pos"><option>Center on Frame</option></select>
                <label for="b-shut">Shutter</label><input id="b-shut" class="slide" style="--fill: 49%" value="0.50">
                <label for="b-bg" class="apart">Background ...</label><input id="b-bg" class="apart" value="100.00">
                <label for="b-max">Max Blur</label><input id="b-max" value="32 px">
                <label for="b-steps">Steps</label><input id="b-steps" value="1">
              </div>
            </section>
            <section class="panel"><h3><svg class="shut"><use href="#chev-right"/></svg>Volumetrics<svg class="grip"><use href="#grip"/></svg></h3></section>
            <section class="panel"><h3><svg class="shut"><use href="#chev-right"/></svg>Performance<svg class="grip"><use href="#grip"/></svg></h3></section>
            <section class="panel"><h3><svg class="shut"><use href="#chev-right"/></svg>Curves<svg class="grip"><use href="#grip"/></svg></h3></section>
            <section class="panel"><h3><svg class="shut"><use href="#chev-right"/></svg>Shadows<svg class="grip"><use href="#grip"/></svg></h3></section>
            <section class="panel"><h3><svg class="shut"><use href="#chev-right"/></svg>Indirect Lighting<svg class="grip"><use href="#grip"/></svg></h3></section>
            <section class="panel"><h3><svg class="shut"><use href="#chev-right"/></svg>Film<svg class="grip"><use href="#grip"/></svg></h3></section>
            <section class="panel"><h3><svg class="shut"><use href="#chev-right"/></svg><label class="check"><input type="checkbox">Simplify</label><svg class="grip"><use href="#grip"/></svg></h3></section>
            <section class="panel"><h3><svg class="shut"><use href="#chev-right"/></svg>Grease Pencil<svg class="grip"><use href="#grip"/></svg></h3></section>
            <section class="panel"><h3><svg class="shut"><use href="#chev-right"/></svg><label class="check"><input type="checkbox">Freestyle</label><svg class="grip"><use href="#grip"/></svg></h3></section>
          </div>
          <div class="panel-bar"></div>
        </div>
      </section>
    </aside>
  </main>

  <footer class="statusbar">
    <span class="hint"><svg><use href="#mouse"/><path d="M1 11V5q0-4 4-4h3v10z" fill="currentColor"/></svg>Set Active Modifier</span>
    <span class="hint"><svg><use href="#mouse"/><rect x="6" y="4" width="4" height="8" rx="2" fill="currentColor"/></svg>Pan View</span>
    <span class="hint"><svg><use href="#mouse"/><path d="M8 1h3q4 0 4 4v6H8z" fill="currentColor"/></svg>Context Menu</span>
    <span class="version">3.6.1</span>
  </footer>

  <div class="taskbar">
    <div class="weather">
      <svg width="33" height="32" viewBox="0 0 33 32"><defs><linearGradient id="sun" x2=".3" y2="1"><stop stop-color="#f5c030"/><stop offset="1" stop-color="#f06a0a"/></linearGradient></defs><circle cx="15" cy="16" r="15" fill="url(#sun)"/><path d="M17 25a4 4 0 0 1 0-8 6 6 0 0 1 11 0 4 4 0 0 1 1 8z" fill="#c3d6fb" stroke="#93b4f2"/></svg>
      <div><b>33℃</b><span class="ko">대체로 화창</span></div>
    </div>
    <div class="apps">
      <button aria-label="Start"><svg width="36" height="36"><defs><linearGradient id="win" x2="1" y2="1"><stop stop-color="#4cd0fb"/><stop offset="1" stop-color="#0070d6"/></linearGradient></defs><path d="M0 2q0-2 2-2h15v17H0zM19 0h15q2 0 2 2v15H19zM0 19h17v17H2q-2 0-2-2zM19 19h17v15q0 2-2 2H19z" fill="url(#win)"/></svg></button>
      <label class="find"><svg width="24" height="24"><circle cx="10" cy="10" r="8" fill="none" stroke="#222" stroke-width="2.500"/><path d="M16 16l6 6" stroke="#222" stroke-width="3"/></svg><input type="search" placeholder="검색" aria-label="검색"></label>
      <button aria-label="Task view"><svg width="38" height="36"><rect y="10" width="28" height="25" rx="2" fill="#2b2b2b"/><rect x="10" y="1" width="27" height="24" rx="2" fill="#fafafa"/><path d="M10 10h18v15H12q-2 0-2-2z" fill="#b5b5b5"/></svg></button>
      <button aria-label="Chat"><svg width="36" height="36"><defs><linearGradient id="chat" x1="1" x2="0" y2="1"><stop stop-color="#8a8ee0"/><stop offset=".5" stop-color="#6460cc"/><stop offset="1" stop-color="#5048b8"/></linearGradient></defs><path d="M2 34l1-8A17 17 0 1 1 12 34z" fill="url(#chat)"/><rect x="8" y="11" width="14" height="14" rx="3" fill="#fff"/><path d="M24 16l4-4v12l-4-4z" fill="#fff"/></svg></button>
      <button aria-label="Explorer"><svg width="38" height="36"><path d="M0 3q0-2 2-2h11l4 4v5H0z" fill="#dc9c10"/><path d="M0 7h15l3-2h18q2 0 2 2v25q0 2-2 2H2q-2 0-2-2z" fill="#fcca3f"/><path d="M7 35V27q0-3 3-3h18q4 0 4 3v8z" fill="#1679cf"/><path d="M12 29.500h14" stroke="#0a4d94" stroke-width="2"/></svg></button>
      <button class="running" aria-label="Edge"><svg width="38" height="38"><defs><linearGradient id="edge"><stop stop-color="#2196e0"/><stop offset=".6" stop-color="#34c5d8"/><stop offset="1" stop-color="#67df59"/></linearGradient></defs><circle cx="19" cy="19" r="18.500" fill="url(#edge)"/><path d="M1 16C6 8 19 8 24 15c-6 0-11 5-8 12 3 6 12 6 19 2-6 10-17 10-23 6C3 31 0 24 1 16z" fill="#0c66b8"/><path d="M16 17q5-5 8 0-3 4 1 7 4 2 9 1l3-3q-1 7-5 7-15 4-16-12z" fill="#d9d9d9"/></svg></button>
      <button aria-label="Store"><svg width="36" height="38"><path d="M10 9V2h16v7" fill="none" stroke="#28b1f0" stroke-width="2.500"/><path d="M0 7h36v25q0 5-5 5H5q-5 0-5-5z" fill="#17549c"/><path d="M10 14h7v7h-7z" fill="#f25022"/><path d="M19 14h7v7h-7z" fill="#7fba00"/><path d="M10 23h7v7h-7z" fill="#00a4ef"/><path d="M19 23h7v7h-7z" fill="#ffb900"/></svg></button>
      <button aria-label="OBS"><svg width="34" height="34"><circle cx="17" cy="17" r="15.500" fill="#222" stroke="#f5f5f5" stroke-width="1.500"/><g fill="none" stroke="#ddd" stroke-width="2"><path id="obs" d="M17 17q5-7-4-11"/><use href="#obs" transform="rotate(120 17 17)"/><use href="#obs" transform="rotate(240 17 17)"/></g></svg></button>
      <button aria-label="Illustrator"><span class="adobe ai">Ai</span></button>
      <button aria-label="Photoshop"><span class="adobe ps">Ps</span></button>
      <button class="current" aria-label="Blender"><svg width="36" height="36" viewBox="0 0 24 24"><circle cx="15.700" cy="13.300" r="5" fill="#fff"/><use href="#blender"/><circle cx="15.700" cy="13.300" r="3.200" fill="#265787"/></svg></button>
      <button aria-label="Calculator"><svg width="28" height="36"><rect width="28" height="36" rx="3" fill="#6d7a86"/><rect x="3" y="3" width="22" height="6" fill="#4ad0fb"/><path d="M3 12h6v5H3zM11 12h6v5h-6zM19 12h6v5h-6zM3 20h6v5H3zM11 20h6v5h-6zM3 28h6v5H3zM11 28h6v5h-6z" fill="#d4dde5"/><path d="M19 20h6v13h-6z" fill="#15488c"/></svg></button>
    </div>
    <div class="tray">
      <button aria-label="Hidden icons"><svg width="16" height="24"><path d="M1 16l7-8 7 8" fill="none" stroke="#1c1c1c" stroke-width="2"/></svg></button>
      <button class="cloud" aria-label="OneDrive"><svg width="25" height="24"><path d="M5 18q-5-1-4-6 1-4 5-4 3-6 9-4 3 1 4 5 4 0 4 4" fill="#8c8c8c" stroke="#1c1c1c" stroke-width="1.500"/><path d="M2 14l10-2 4 6H6q-3 0-4-4z" fill="#eee"/><circle cx="17.500" cy="16.500" r="6.500" fill="#777"/><path d="M16 13v7M19 13v7" stroke="#fff" stroke-width="1.300"/></svg></button>
      <button class="ime" aria-label="Input mode"><svg width="18" height="24"><path d="M0 23L9 1l9 22M3 16h12" fill="none" stroke="#1c1c1c" stroke-width="1.500"/></svg></button>
      <button class="net" aria-label="Quick settings">
        <svg width="24" height="24"><path d="M0 9q12-10 24 0M4 13q8-7 16 0M8 17q4-4 8 0" fill="none" stroke="#1c1c1c" stroke-width="1.700"/><circle cx="12" cy="19.500" r="2" fill="#1c1c1c"/></svg>
        <svg width="25" height="24"><path d="M1 8h4l6-5v18l-6-5H1zM14 8q3 4 0 8" fill="none" stroke="#1c1c1c" stroke-width="1.600"/><path d="M17 6q4 6 0 12M20 3q7 9 0 18" fill="none" stroke="#aaa" stroke-width="1.500"/></svg>
        <svg width="24" height="24"><rect x="1" y="6" width="19" height="14" rx="3" fill="none" stroke="#1c1c1c" stroke-width="1.800"/><rect x="4" y="9" width="13" height="8" fill="#1c1c1c"/><path d="M21 10h3v6h-3z" fill="#1c1c1c"/><path d="M4 1h4L7 5h3l-7 9 1-6H0z" fill="#1c1c1c" stroke="#d9d9d9"/></svg>
      </button>
      <button class="clock"><span>오후 2:35</span><span>2023-07-30</span></button>
      <button class="badge">5</button>
    </div>
  </div>
</body>
</html>
```

FILE: styles.css
```css
* {
  box-sizing: border-box;
}
body {
  margin: 0;
  height: 100vh;
  display: flex;
  flex-direction: column;
  overflow: hidden;
  background: #161616;
  color: #e0e0e0;
  font-family: "DejaVu Sans", sans-serif;
  font-size: 16px;
}
button, input, select {
  font: inherit;
  color: inherit;
  margin: 0;
  padding: 0;
  border: 0;
  background: none;
  outline: none;
  min-width: 0;
}
button {
  display: flex;
  align-items: center;
  justify-content: center;
}
h2, h3, p, ul {
  margin: 0;
  padding: 0;
  font-weight: normal;
  list-style: none;
}
svg {
  flex: none;
}
.sprite {
  position: absolute;
}
.icon {
  width: 22px;
  height: 22px;
}
.small {
  width: 13px;
  height: 13px;
}
.chev {
  width: 10px;
  height: 10px;
}
.dim {
  color: #999;
}
.ko {
  font-size: 19px;
}
select {
  appearance: none;
  height: 29px;
  padding: 0 20px 0 11px;
  border: 1px solid #3d3d3d;
  border-radius: 5px;
  background: #282828 url("data:image/svg+xml,%3Csvg xmlns='http://www.w3.org/2000/svg' width='10' height='8'%3E%3Cpath d='M1 2l4 4 4-4' fill='none' stroke='%23e0e0e0' stroke-width='1.6'/%3E%3C/svg%3E") no-repeat right 4px center;
}

/* window title */
.titlebar {
  flex: none;
  height: 34px;
  display: flex;
  align-items: center;
  background: #f2f2f2;
  color: #000;
}
.titlebar .logo {
  width: 24px;
  height: 24px;
  margin: 0 4px 0 2px;
  color: #ea7600;
}
.title {
  flex: 1;
  font: 17px/34px "Open Sans", "Noto Sans CJK KR", sans-serif;
}
.title .ko {
  line-height: 20px;
}
.titlebar button {
  width: 70px;
  height: 34px;
}
.titlebar button:last-child {
  margin-right: 2px;
}

/* top bar */
.topbar {
  flex: none;
  height: 38px;
  display: flex;
  align-items: center;
  gap: 8px;
  padding: 0 10px 0 14px;
  background: #1d1d1d;
}
.menus {
  display: flex;
  gap: 22px;
}
.topbar .menus {
  align-items: center;
}
.topbar .menus .icon {
  margin-right: -7px;
}
.workspaces {
  flex: 1;
  align-self: flex-end;
  display: flex;
  gap: 2px;
  margin-left: 25px;
  color: #989898;
}
.workspaces button {
  height: 29px;
  padding: 0 13px;
  border-radius: 5px 5px 0 0;
}
.workspaces .active {
  background: #303030;
  color: #fff;
}
.id-block {
  display: flex;
  height: 29px;
  border: 1px solid #3d3d3d;
  border-radius: 5px;
  overflow: hidden;
  background: #1d1d1d;
}
.id-block button {
  width: 29px;
  border-left: 1px solid #3d3d3d;
  background: #282828;
}
.id-block button:first-child {
  border-left: 0;
}
.id-block .pick {
  width: 45px;
  gap: 2px;
}
.id-block input {
  padding-left: 11px;
  border-left: 1px solid #3d3d3d;
}
.id-block .lit {
  background: #545454;
}
.id-block .off {
  background: #303030;
  color: #777;
}
.id-block .on {
  background: #4772b3;
}
.id-block .pin-btn {
  width: 32px;
  border: 0;
  background: none;
}
.scene-name {
  width: 141px;
}
.layer-name {
  width: 174px;
}
.mat-name {
  width: 172px;
}

.screen {
  flex: 1;
  min-height: 0;
  display: flex;
  gap: 3px;
  padding: 2px 1px 2px 0;
}

/* shader editor */
.editor {
  flex: 1;
  min-width: 0;
  position: relative;
  overflow: hidden;
  background: #1d1d1d;
  border-radius: 6px;
}
.editor-header {
  position: relative;
  z-index: 2;
  display: flex;
  align-items: center;
  padding: 5px 10px 4px 11px;
}
.type-btn, .box {
  height: 29px;
  border: 1px solid #3d3d3d;
  border-radius: 5px;
  background: #282828;
  gap: 2px;
}
.type-btn, .box.pick {
  width: 46px;
}
.mode {
  position: relative;
  margin: 0 18px 0 7px;
}
.mode .icon {
  position: absolute;
  left: 7px;
  top: 4px;
}
.mode select {
  width: 135px;
  padding-left: 39px;
}
.check {
  display: flex;
  align-items: center;
  gap: 6px;
}
input[type="checkbox"] {
  appearance: none;
  flex: none;
  width: 19px;
  height: 19px;
  border-radius: 4px;
  background: #545454;
}
input[type="checkbox"]:checked {
  background: #4772b3 url("data:image/svg+xml,%3Csvg xmlns='http://www.w3.org/2000/svg' viewBox='0 0 20 20'%3E%3Cpath d='M4 11l4 4 8-10' fill='none' stroke='white' stroke-width='2.2'/%3E%3C/svg%3E") center / 100%;
}
.use-nodes {
  margin-left: 18px;
  color: #fff;
}
.slot {
  width: 116px;
  margin: 0 8px 0 238px;
}
.plain {
  margin-left: 10px;
}
.header-right {
  margin-left: auto;
  display: flex;
  gap: 7px;
}
.box.parent {
  width: 29px;
  background: #303030;
}
.header-right .parent .icon {
  opacity: .6;
}
.header-right .on + button {
  width: 29px;
}
.crumbs {
  position: absolute;
  left: 28px;
  top: 58px;
  display: flex;
  align-items: center;
  height: 22px;
}
.crumbs span {
  margin: 0 23px 0 13px;
}
.crumbs .sep {
  width: 9px;
  height: 14px;
  margin-right: 12px;
}
.toggle {
  position: absolute;
  top: 58px;
  width: 11px;
  height: 22px;
  background: #181818;
}
.toggle svg {
  width: 7px;
  height: 12px;
}
.toggle.left {
  left: 0;
}
.toggle.right {
  right: 0;
}
.toggle.right svg {
  transform: scaleX(-1);
}
.bar-v {
  position: absolute;
  right: 2px;
  top: 51px;
  bottom: 20px;
  width: 6px;
  border-radius: 3px;
  background: rgba(90, 90, 90, .3);
}
.bar-h {
  position: absolute;
  left: 12px;
  bottom: 2px;
  width: 55%;
  height: 5px;
  border-radius: 3px;
  background: rgba(90, 90, 90, .3);
}
.node-tree {
  position: absolute;
  inset: 0;
  font-size: 14px;
}
.links {
  position: absolute;
  width: 100%;
  height: 100%;
}

/* nodes */
.node {
  position: absolute;
  width: 187px;
  padding-bottom: 6px;
  border-radius: 5px;
  background: #303030;
  box-shadow: 0 0 0 1px #141414, 0 3px 10px rgba(0, 0, 0, .7);
  text-shadow: 0 1px 2px rgba(0, 0, 0, .6);
}
.node.ramp {
  width: 321px;
}
.n-coord { left: 83px; top: 555px; }
.n-noise { left: 377px; top: 360px; padding-bottom: 4px; }
.n-mix { left: 699px; top: 452px; }
.n-mapping { left: 1024px; top: 445px; }
.n-gradient { left: 1319px; top: 473px; }
.n-ramp1 { left: 1708px; top: 294px; }
.n-ramp2 { left: 1716px; top: 758px; }
.node h2 {
  display: flex;
  align-items: center;
  gap: 7px;
  height: 26px;
  padding-left: 14px;
  border-radius: 5px 5px 0 0;
  font-size: 14px;
}
.node h2 svg {
  width: 12px;
  height: 9px;
}
.input { background: #83314a; }
.texture { background: #79461d; }
.color { background: #6e6e1d; }
.vector { background: #3c3c83; }
.convert { background: #246283; }
.outs {
  display: flex;
  flex-direction: column;
  padding-top: 5px;
}
.n-coord .outs {
  height: 199px;
}
.n-coord .out {
  flex: 1;
}
.out, .in {
  position: relative;
  display: flex;
  align-items: center;
  height: 28px;
  padding: 0 14px;
}
.out {
  justify-content: flex-end;
}
/* sockets sit on the node edge */
.in::before, .out::before {
  content: "";
  position: absolute;
  left: -7px;
  width: 13px;
  height: 13px;
  border: 1px solid #141414;
  border-radius: 50%;
  background: #a1a1a1;
}
.out::before {
  left: auto;
  right: -7px;
}
.in.vec::before, .out.vec::before { background: #6363c7; }
.in.col::before, .out.col::before { background: #c7c729; }
.stack {
  display: flex;
  flex-direction: column;
  gap: 7px;
  padding: 12px 13px 0;
}
.stack > * {
  height: 25px;
}
.in.first {
  margin-top: 5px;
}
.node select {
  height: 25px;
  padding-left: 9px;
}
.node .check {
  gap: 5px;
}
.node input[type="checkbox"] {
  width: 17px;
  height: 17px;
}
.line {
  display: flex;
  align-items: center;
  gap: 13px;
}
.line.tight {
  gap: 2px;
}
.line select, .picker {
  flex: 1;
  min-width: 0;
}
.stack .line.wide {
  height: 25px;
  margin: 0 -13px;
  padding: 0 13px;
}
.picker {
  display: flex;
  align-items: center;
  height: 25px;
  padding: 0 5px;
  border: 1px solid #3d3d3d;
  border-radius: 4px;
  background: #1d1d1d;
}
.picker svg {
  width: 18px;
  height: 18px;
}
.picker input {
  flex: 1;
}
.dropper {
  color: #aaa;
}
.num {
  flex: 1;
  min-width: 0;
  display: flex;
  align-items: center;
  height: 25px;
  padding: 0 19px 0 20px;
  border-radius: 4px;
  background: #545454;
}
.num input {
  flex: 1;
  width: 0;
  text-align: right;
  text-shadow: inherit;
}
.slide {
  background: linear-gradient(to right, #4772b3 var(--fill), #545454 var(--fill));
}
.ins {
  display: flex;
  flex-direction: column;
  height: 116px;
}
.ins .in {
  flex: 1;
  padding: 0 13px;
}
.triple {
  display: grid;
  gap: 1px;
  margin: 0 13px 0 14px;
  border-radius: 5px;
  overflow: hidden;
}
.triple .num {
  border-radius: 0;
}
.keyed .num {
  background: #467d28;
}
.ramp-tools {
  display: flex;
  align-items: center;
  height: 25px;
  margin: 18px 14px 0 21px;
  gap: 22px;
}
.ramp-tools button:nth-child(3) {
  margin-left: 5px;
}
.pair {
  flex: none;
  display: grid;
  grid-template-columns: 1fr 1fr;
  width: 171px;
  margin-left: auto;
}
.pair select:first-child {
  border-radius: 5px 0 0 5px;
}
.pair select:last-child {
  border-left: 0;
  border-radius: 0 5px 5px 0;
}
.band {
  display: block;
  margin: 6px 0 8px 20px;
}
.ramp-pos {
  display: flex;
  gap: 12px;
  padding: 0 14px;
}
.index {
  width: 83px;
  height: 25px;
  border-radius: 4px;
  background: #545454;
  text-align: center;
}
.swatch {
  width: 293px;
  height: 25px;
  margin: 7px 14px 6px;
  border: 1px solid #3d3d3d;
  border-radius: 4px;
  background: #000;
}
.swatch.white {
  background: #fff;
}

/* sidebar */
.side {
  flex: none;
  width: 442px;
  display: flex;
  flex-direction: column;
  gap: 3px;
}
.area-header {
  display: flex;
  align-items: center;
  height: 37px;
  padding: 0 10px 0 11px;
}
.second {
  margin-left: 7px;
}
.search {
  display: flex;
  align-items: center;
  width: 173px;
  height: 29px;
  margin-left: 22px;
  padding-left: 6px;
  border: 1px solid #3d3d3d;
  border-radius: 5px;
  background: #1d1d1d;
}
.search input {
  flex: 1;
}
.filter {
  margin-left: auto;
}
.newcol, .options {
  width: 29px;
  margin-left: 8px;
}
.newcol {
  background: #545454;
}
.outliner {
  height: 221px;
  border-radius: 6px;
  background: #282828;
  overflow: hidden;
}
.rows {
  position: relative;
  height: 184px;
  overflow: hidden;
}
.rows ul {
  margin-top: -5px;
}
/* tree line and scroll bar */
.rows::before {
  content: "";
  position: absolute;
  left: 42px;
  top: 31px;
  width: 1px;
  height: 131px;
  background: #666;
}
.rows::after {
  content: "";
  position: absolute;
  right: 2px;
  top: 39px;
  width: 6px;
  height: 125px;
  border-radius: 3px;
  background: rgba(90, 90, 90, .5);
}
.rows li {
  display: flex;
  align-items: center;
  height: 29px;
  padding: 1px 18px 0 68px;
  color: #c0c0c0;
}
.rows li:nth-child(odd) {
  background: #2b2b2b;
}
.rows .coll {
  padding-left: 38px;
}
.rows .selected {
  background: #334d80;
  color: #ffaf29;
}
.tri {
  width: 10px;
  height: 10px;
  margin-right: 9px;
  color: #c8c8c8;
}
.oi {
  display: flex;
  align-items: center;
  justify-content: center;
  width: 29px;
  height: 27px;
  margin-right: 5px;
  border-radius: 6px;
}
.coll .oi {
  color: #e6e6e6;
}
.oi.lit {
  background: rgba(255, 255, 255, .2);
}
.orange { color: #c17f4b; }
.blue { color: #668cdb; }
.green { color: #00b888; }
.red { color: #b6575d; }
.data, .data2 {
  color: #00b888;
}
.data {
  margin-left: 32px;
}
.data.oi {
  margin-left: 29px;
}
.data.blue {
  color: #668cdb;
}
.data2 {
  margin-left: 7px;
}
.eye {
  width: 20px;
  height: 15px;
  margin-left: auto;
  color: #e6e6e6;
}
.ren {
  width: 20px;
  height: 17px;
  margin-left: 9px;
  color: #e6e6e6;
}
.rows .vis {
  width: 16px;
  height: 16px;
  margin-left: auto;
  border-radius: 2px;
}
.rows .vis:checked {
  background: #e6e6e6 url("data:image/svg+xml,%3Csvg xmlns='http://www.w3.org/2000/svg' viewBox='0 0 20 20'%3E%3Cpath d='M4 10l4 5 8-11' fill='none' stroke='%23282828' stroke-width='3'/%3E%3C/svg%3E") center / 100%;
}
.vis + .eye {
  margin-left: 11px;
}

.properties {
  flex: 1;
  min-height: 0;
  display: flex;
  flex-direction: column;
  border-radius: 6px;
  background: #303030;
  overflow: hidden;
}
.props-search {
  margin-left: 76px;
}
.options {
  margin-left: auto;
}
.properties .area-header {
  flex: none;
}
.props-body {
  flex: 1;
  min-height: 0;
  position: relative;
  display: flex;
}
.tabs {
  flex: none;
  width: 42px;
  display: flex;
  flex-direction: column;
  gap: 2px;
  padding: 13px 0 0 4px;
  background: #1d1d1d;
  color: #a8a8a8;
}
.tabs button {
  flex: none;
  width: 38px;
  height: 38px;
  border-radius: 5px 0 0 5px;
}
.tabs .active {
  background: #303030;
  color: #e0e0e0;
}
.tabs .bright {
  color: #e0e0e0;
}
.tabs hr {
  flex: none;
  width: 36px;
  height: 1px;
  margin: 4px 0 4px 2px;
  border: 0;
  background: #161616;
}
.tabs .red { color: #b6575d; }
.tabs .blue { color: #668cdb; }
.tabs .green { color: #00b888; }
.tabs .orange { color: #c17f4b; }
.panels {
  flex: 1;
  min-width: 0;
  padding: 12px 12px 0 11px;
}
.context {
  display: flex;
  align-items: center;
  height: 28px;
  padding: 0 3px 0 5px;
  gap: 13px;
}
.context .plain {
  margin-left: auto;
}
.engine {
  display: flex;
  align-items: center;
  justify-content: space-between;
  margin: 25px 0 15px 30px;
}
.engine select {
  width: 219px;
}
.panel {
  margin-bottom: 2px;
  border-radius: 5px;
  background: #3d3d3d;
}
.panel h3 {
  display: flex;
  align-items: center;
  height: 36px;
  padding: 0 11px 0 12px;
  font-size: 16px;
}
.panel h3 > svg {
  color: #aaa;
}
.panel h3 .check {
  gap: 4px;
  margin-left: -1px;
}
.open {
  width: 13px;
  height: 9px;
  margin-right: 6px;
}
.shut {
  width: 9px;
  height: 13px;
  margin: 0 6px 0 4px;
}
.grip {
  width: 15px;
  height: 9px;
  margin-left: auto;
}
.form {
  display: grid;
  align-items: center;
  column-gap: 14px;
  padding: 12px 13px 14px 0;
  text-align: right;
}
.form > input {
  height: 27px;
  border-radius: 4px;
  background: #545454;
  text-align: center;
}
.sampling {
  grid-template-columns: 147px 1fr;
  row-gap: 1px;
}
.form .f-top {
  height: 28px;
  border-radius: 4px 4px 0 0;
}
.form .f-bottom {
  height: 28px;
  border-radius: 0 0 4px 4px;
}
.sampling .check {
  grid-column: 2;
  height: 27px;
  margin-top: 7px;
  gap: 5px;
  color: #fff;
}
.blur {
  grid-template-columns: 135px 1fr;
  row-gap: 5px;
  padding-right: 42px;
  color: #8c8c8c;
}
.form.blur > input {
  background: #474747;
}
.form.blur > .slide {
  background: linear-gradient(to right, #465b80 var(--fill), #474747 var(--fill));
}
.blur select {
  height: 27px;
  border-color: #303030;
  background-color: #303030;
  opacity: .8;
}
.blur .apart {
  margin-top: 11px;
}
.panel-bar {
  position: absolute;
  right: 2px;
  top: 15px;
  width: 6px;
  height: 92%;
  border-radius: 3px;
  background: #3f3f3f;
}

/* status bar */
.statusbar {
  flex: none;
  display: flex;
  align-items: center;
  height: 29px;
  padding: 0 13px 0 17px;
  background: #1d1d1d;
  color: #8c8c8c;
}
.hint {
  display: flex;
  align-items: center;
  gap: 17px;
  width: 350px;
}
.hint svg {
  width: 16px;
  height: 22px;
}
.version {
  margin-left: auto;
}

/* taskbar */
.taskbar {
  flex: none;
  display: grid;
  grid-template-columns: 1fr auto 1fr;
  align-items: center;
  height: 72px;
  padding-bottom: 2px;
  border-top: 2px solid #acacac;
  background: #d9d9d9;
  color: #1c1c1c;
  font: 17px "Open Sans", "Noto Sans CJK KR", sans-serif;
}
.weather {
  display: flex;
  align-items: center;
  gap: 12px;
  padding-left: 32px;
}
.weather div {
  display: flex;
  flex-direction: column;
  line-height: 23px;
}
.weather b {
  font-weight: normal;
}
.weather span {
  color: #555;
}
.apps {
  display: flex;
  align-items: center;
}
.apps button {
  position: relative;
  width: 58px;
  height: 58px;
  margin: 0 4px;
  border-radius: 6px;
}
.find {
  display: flex;
  align-items: center;
  gap: 16px;
  width: 328px;
  height: 47px;
  margin: 0 4px 0 7px;
  padding-left: 13px;
  border: 2px solid #c8c8c8;
  border-radius: 24px;
  background: #f3f3f3;
}
.find input {
  flex: 1;
  font-size: 21px;
}
.find input::placeholder {
  color: #5c5c5c;
}
.running::after, .current::after {
  content: "";
  position: absolute;
  bottom: 0;
  width: 9px;
  height: 5px;
  border-radius: 3px;
  background: #777;
}
.current::after {
  width: 24px;
  background: #0078d7;
}
.apps .current {
  background: #ececec;
  color: #ea7600;
}
.adobe {
  width: 34px;
  height: 34px;
  border-radius: 6px;
  font: bold 19px/34px "Open Sans", sans-serif;
  text-align: center;
}
.ai {
  background: #330000;
  color: #ff9a00;
}
.ps {
  background: #001e36;
  color: #31a8ff;
}
.tray {
  display: flex;
  align-items: center;
  justify-content: flex-end;
  padding-right: 30px;
}
.cloud {
  margin-left: 28px;
}
.ime {
  margin-left: 26px;
}
.net {
  margin-left: 27px;
  gap: 12px;
}
.clock {
  flex-direction: column;
  align-items: flex-end;
  width: 106px;
  margin: 0 10px 0 14px;
  font-size: 17px;
  line-height: 24px;
}
.badge {
  width: 24px;
  height: 24px;
  border-radius: 50%;
  background: #0067c0;
  color: #fff;
}
```
